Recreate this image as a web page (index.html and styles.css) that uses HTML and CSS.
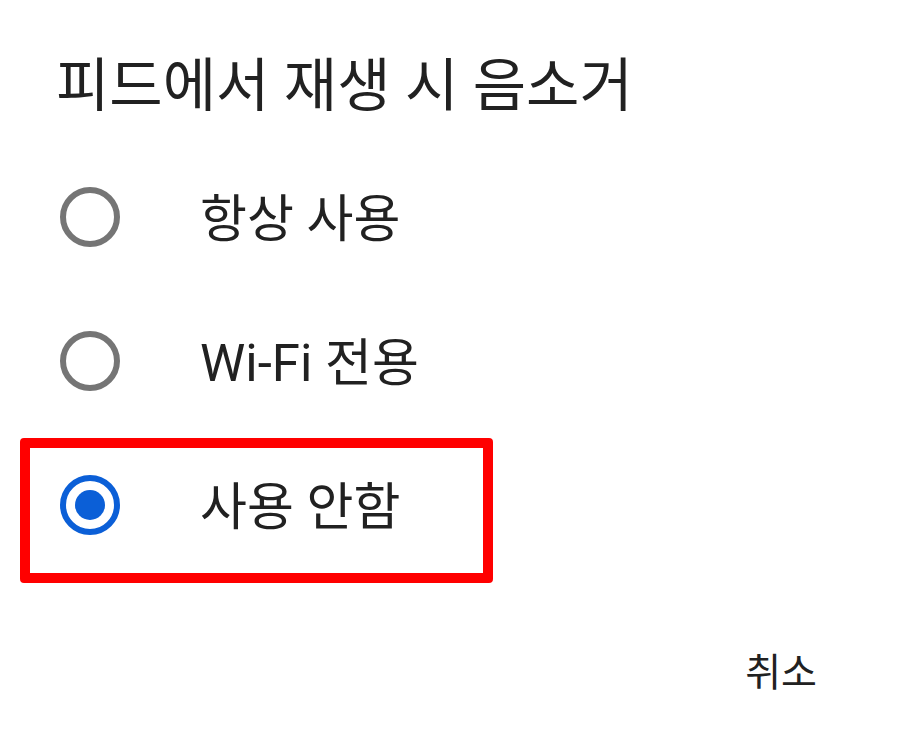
FILE: index.html
```html
<!DOCTYPE html>
<html lang="ko">
<head>
    <meta charset="UTF-8">
    <meta name="viewport" content="width=device-width, initial-scale=1.0">
    <title>피드에서 재생 시 음소거</title>
    <link rel="stylesheet" href="styles.css">
</head>
<body>

<!-- Mute Dialog -->
<div class="dialog">
    <h1 class="title">피드에서 재생 시 음소거</h1>

    <div class="options">
        <label class="option">
            <span class="radio"></span>
            <span class="label">항상 사용</span>
        </label>
        <label class="option">
            <span class="radio"></span>
            <span class="label">Wi-Fi 전용</span>
        </label>
        <label class="option">
            <span class="radio checked"></span>
            <span class="label">사용 안함</span>
            <!-- highlight annotation -->
            <span class="highlight"></span>
        </label>
    </div>

    <div class="actions">
        <button class="cancel-btn">취소</button>
    </div>
</div>

</body>
</html>
```

FILE: styles.css
```css
* {
    margin: 0;
    padding: 0;
    box-sizing: border-box;
}

body {
    background: #ffffff;
    font-family: Roboto, "Noto Sans CJK KR", sans-serif;
    color: #212121;
}

/* Dialog */
.dialog {
    width: 901px;
    height: 743px;
    overflow: hidden;
}

.title {
    font-size: 58px;
    font-weight: 400;
    line-height: 1;
    padding: 57px 0 0 56px;
    height: 145px;
}

/* Radio Options */
.options {
    display: flex;
    flex-direction: column;
}

.option {
    position: relative;
    display: flex;
    align-items: center;
    height: 144px;
    padding-left: 60px;
}

.radio {
    width: 60px;
    height: 60px;
    border-radius: 50%;
    border: 6px solid #757575;
    display: flex;
    align-items: center;
    justify-content: center;
    flex-shrink: 0;
}

.radio.checked {
    border-color: #0b5fd7;
}

.radio.checked::after {
    content: "";
    width: 30px;
    height: 30px;
    border-radius: 50%;
    background: #0b5fd7;
}

.label {
    margin-left: 80px;
    font-size: 51px;
    line-height: 1;
    padding-top: 4px;
}

/* Red annotation box */
.highlight {
    position: absolute;
    left: 20px;
    top: 5px;
    width: 473px;
    height: 145px;
    border: 10px solid #ff0000;
    border-radius: 4px;
}

/* Buttons */
.actions {
    display: flex;
    justify-content: flex-end;
    padding: 77px 84px 0 0;
}

.cancel-btn {
    background: none;
    border: none;
    font-family: Roboto, "Noto Sans CJK KR", sans-serif;
    font-size: 39px;
    color: #212121;
    line-height: 1;
}
```
